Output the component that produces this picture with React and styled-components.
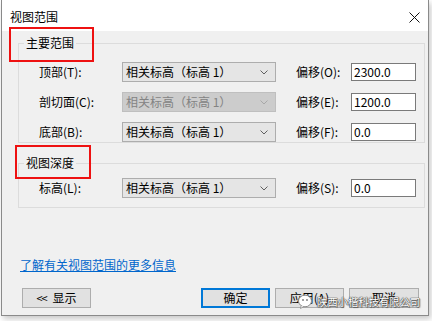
import React from 'react';
import styled, { createGlobalStyle } from 'styled-components';

const Global = createGlobalStyle`
  html, body { margin: 0; padding: 0; background: #ffffff; }
  body {
    font-family: "Noto Sans CJK SC", "Noto Sans", sans-serif;
    font-size: 12px;
    color: #000;
  }
  #root { width: 432px; height: 321px; overflow: hidden; position: relative; }
`;

const Dialog = styled.div`
  box-sizing: border-box;
  margin-left: 1px;
  width: 428px;
  border: 1px solid #8a8a8a;
  border-top: none;
  background: #f0f0f0;
  box-shadow: 2px 3px 6px rgba(0, 0, 0, 0.22);
  display: flex;
  flex-direction: column;
`;

const TitleBar = styled.div`
  height: 31px;
  background: #ffffff;
  display: flex;
  align-items: center;
  justify-content: space-between;
  padding: 2px 8px 0 8px;
  box-sizing: border-box;
`;

const Title = styled.span`
  line-height: 16px;
`;

const CloseBtn = styled.span`
  display: flex;
  width: 11px;
  height: 11px;
  margin-top: 1px;
`;

const Body = styled.div`
  display: flex;
  flex-direction: column;
  padding: 12px 3px 7px 16px;
`;

const GroupBox = styled.div`
  position: relative;
  border: 1px solid #dcdcdc;
  margin-top: ${p => p.$mt || 0}px;
  padding: ${p => p.$pt}px 0 ${p => p.$pb}px 20px;
  display: flex;
  flex-direction: column;
  gap: 10px;
`;

const Legend = styled.span`
  position: absolute;
  top: -9px;
  left: 5px;
  padding: 0 2px;
  background: #f0f0f0;
  line-height: 16px;
`;

const Row = styled.div`
  display: flex;
  align-items: center;
  height: 20px;
`;

const Label = styled.span`
  width: ${p => p.$w}px;
  line-height: 16px;
  white-space: nowrap;
`;

const Combo = styled.div`
  box-sizing: border-box;
  width: 154px;
  height: 20px;
  border: 1px solid ${p => (p.$disabled ? '#bfbfbf' : '#adadad')};
  background: ${p => (p.$disabled ? '#cccccc' : '#e5e5e5')};
  color: ${p => (p.$disabled ? '#838383' : '#000')};
  display: flex;
  align-items: center;
  justify-content: space-between;
  padding: 0 7px 0 3px;
  margin-right: 20px;
  line-height: 16px;
`;

const Chevron = styled.svg`
  width: 8px;
  height: 5px;
  display: block;
`;

const TextBox = styled.div`
  box-sizing: border-box;
  width: 65px;
  height: 18px;
  border: 1px solid #7a7a7a;
  background: #fff;
  padding-left: 2px;
  display: flex;
  align-items: center;
  line-height: 16px;
`;

const Link = styled.a`
  margin-top: 49px;
  margin-left: 2px;
  align-self: flex-start;
  color: #0066cc;
  text-decoration: underline;
  line-height: 16px;
  cursor: pointer;
`;

const ButtonRow = styled.div`
  margin-top: 15px;
  display: flex;
  justify-content: space-between;
  padding: 0 6px 0 4px;
`;

const ButtonGroup = styled.div`
  display: flex;
  gap: 5px;
`;

const Button = styled.div`
  box-sizing: border-box;
  width: ${p => p.$w || 70}px;
  height: 20px;
  border: ${p => (p.$default ? '2px solid #0078d7' : '1px solid #adadad')};
  background: #e1e1e1;
  display: flex;
  align-items: center;
  justify-content: center;
  line-height: 16px;
  white-space: nowrap;
`;

const Chevrons = styled.span`
  font-size: 11px;
  margin-right: 6px;
  letter-spacing: -1px;
`;

const RedBox = styled.div`
  position: absolute;
  left: ${p => p.$x}px;
  top: ${p => p.$y}px;
  width: ${p => p.$w}px;
  height: ${p => p.$h}px;
  box-sizing: border-box;
  border: 2px solid #ee1111;
  pointer-events: none;
`;

const Watermark = styled.div`
  position: absolute;
  left: 298px;
  top: 294px;
  display: flex;
  align-items: center;
  gap: 3px;
  pointer-events: none;
`;

const WatermarkText = styled.span`
  font-size: 10.5px;
  line-height: 14px;
  color: #ffffff;
  letter-spacing: -0.2px;
  text-shadow: 0 0 1px #444, 0 0 1px #444, 0 0 1px #444, 1px 1px 1px rgba(0,0,0,0.5);
`;

const ChevronIcon = ({ disabled }) => (
  <Chevron viewBox="0 0 8 5">
    <polyline points="0.5,0.5 4,4 7.5,0.5" fill="none" stroke={disabled ? '#a8a8a8' : '#606060'} strokeWidth="1" />
  </Chevron>
);

const Field = ({ label, value, disabled, offLabel, offValue }) => (
  <Row>
    <Label $w={83}>{label}</Label>
    <Combo $disabled={disabled}>
      <span>{value}</span>
      <ChevronIcon disabled={disabled} />
    </Combo>
    <Label $w={55}>{offLabel}</Label>
    <TextBox>{offValue}</TextBox>
  </Row>
);

export default function App() {
  const rel = '相关标高（标高 1）';
  return (
    <>
      <Global />
      <Dialog>
        <TitleBar>
          <Title>视图范围</Title>
          <CloseBtn>
            <svg width="11" height="11" viewBox="0 0 11 11">
              <path d="M0.5 0.5 L10.5 10.5 M10.5 0.5 L0.5 10.5" stroke="#111" strokeWidth="1" />
            </svg>
          </CloseBtn>
        </TitleBar>
        <Body>
          <GroupBox $pt={18} $pb={0}>
            <Legend>主要范围</Legend>
            <Field label="顶部(T):" value={rel} offLabel="偏移(O):" offValue="2300.0" />
            <Field label="剖切面(C):" value={rel} disabled offLabel="偏移(E):" offValue="1200.0" />
            <Field label="底部(B):" value={rel} offLabel="偏移(F):" offValue="0.0" />
          </GroupBox>
          <GroupBox $mt={20} $pt={14} $pb={9}>
            <Legend>视图深度</Legend>
            <Field label="标高(L):" value={rel} offLabel="偏移(S):" offValue="0.0" />
          </GroupBox>
          <Link>了解有关视图范围的更多信息</Link>
          <ButtonRow>
            <Button $w={69}><Chevrons>&lt;&lt;</Chevrons>显示</Button>
            <ButtonGroup>
              <Button $w={69} $default>确定</Button>
              <Button $w={69}>应用(A)</Button>
              <Button $w={70}>取消</Button>
            </ButtonGroup>
          </ButtonRow>
        </Body>
      </Dialog>
      <RedBox $x={9} $y={27} $w={85} $h={35} />
      <RedBox $x={15} $y={145} $w={76} $h={34} />
      <Watermark>
        <svg width="16" height="15" viewBox="0 0 16 15">
          <ellipse cx="7" cy="7" rx="6.5" ry="5.8" fill="#fff" stroke="#8a8a8a" strokeWidth="1" />
          <path d="M3 12 L2.5 14.5 L6 12.5" fill="#fff" stroke="#8a8a8a" strokeWidth="0.8" />
          <circle cx="5" cy="6" r="0.9" fill="#777" />
          <circle cx="9" cy="6" r="0.9" fill="#777" />
        </svg>
        <WatermarkText>陕西小楷科技有限公司</WatermarkText>
      </Watermark>
    </>
  );
}
